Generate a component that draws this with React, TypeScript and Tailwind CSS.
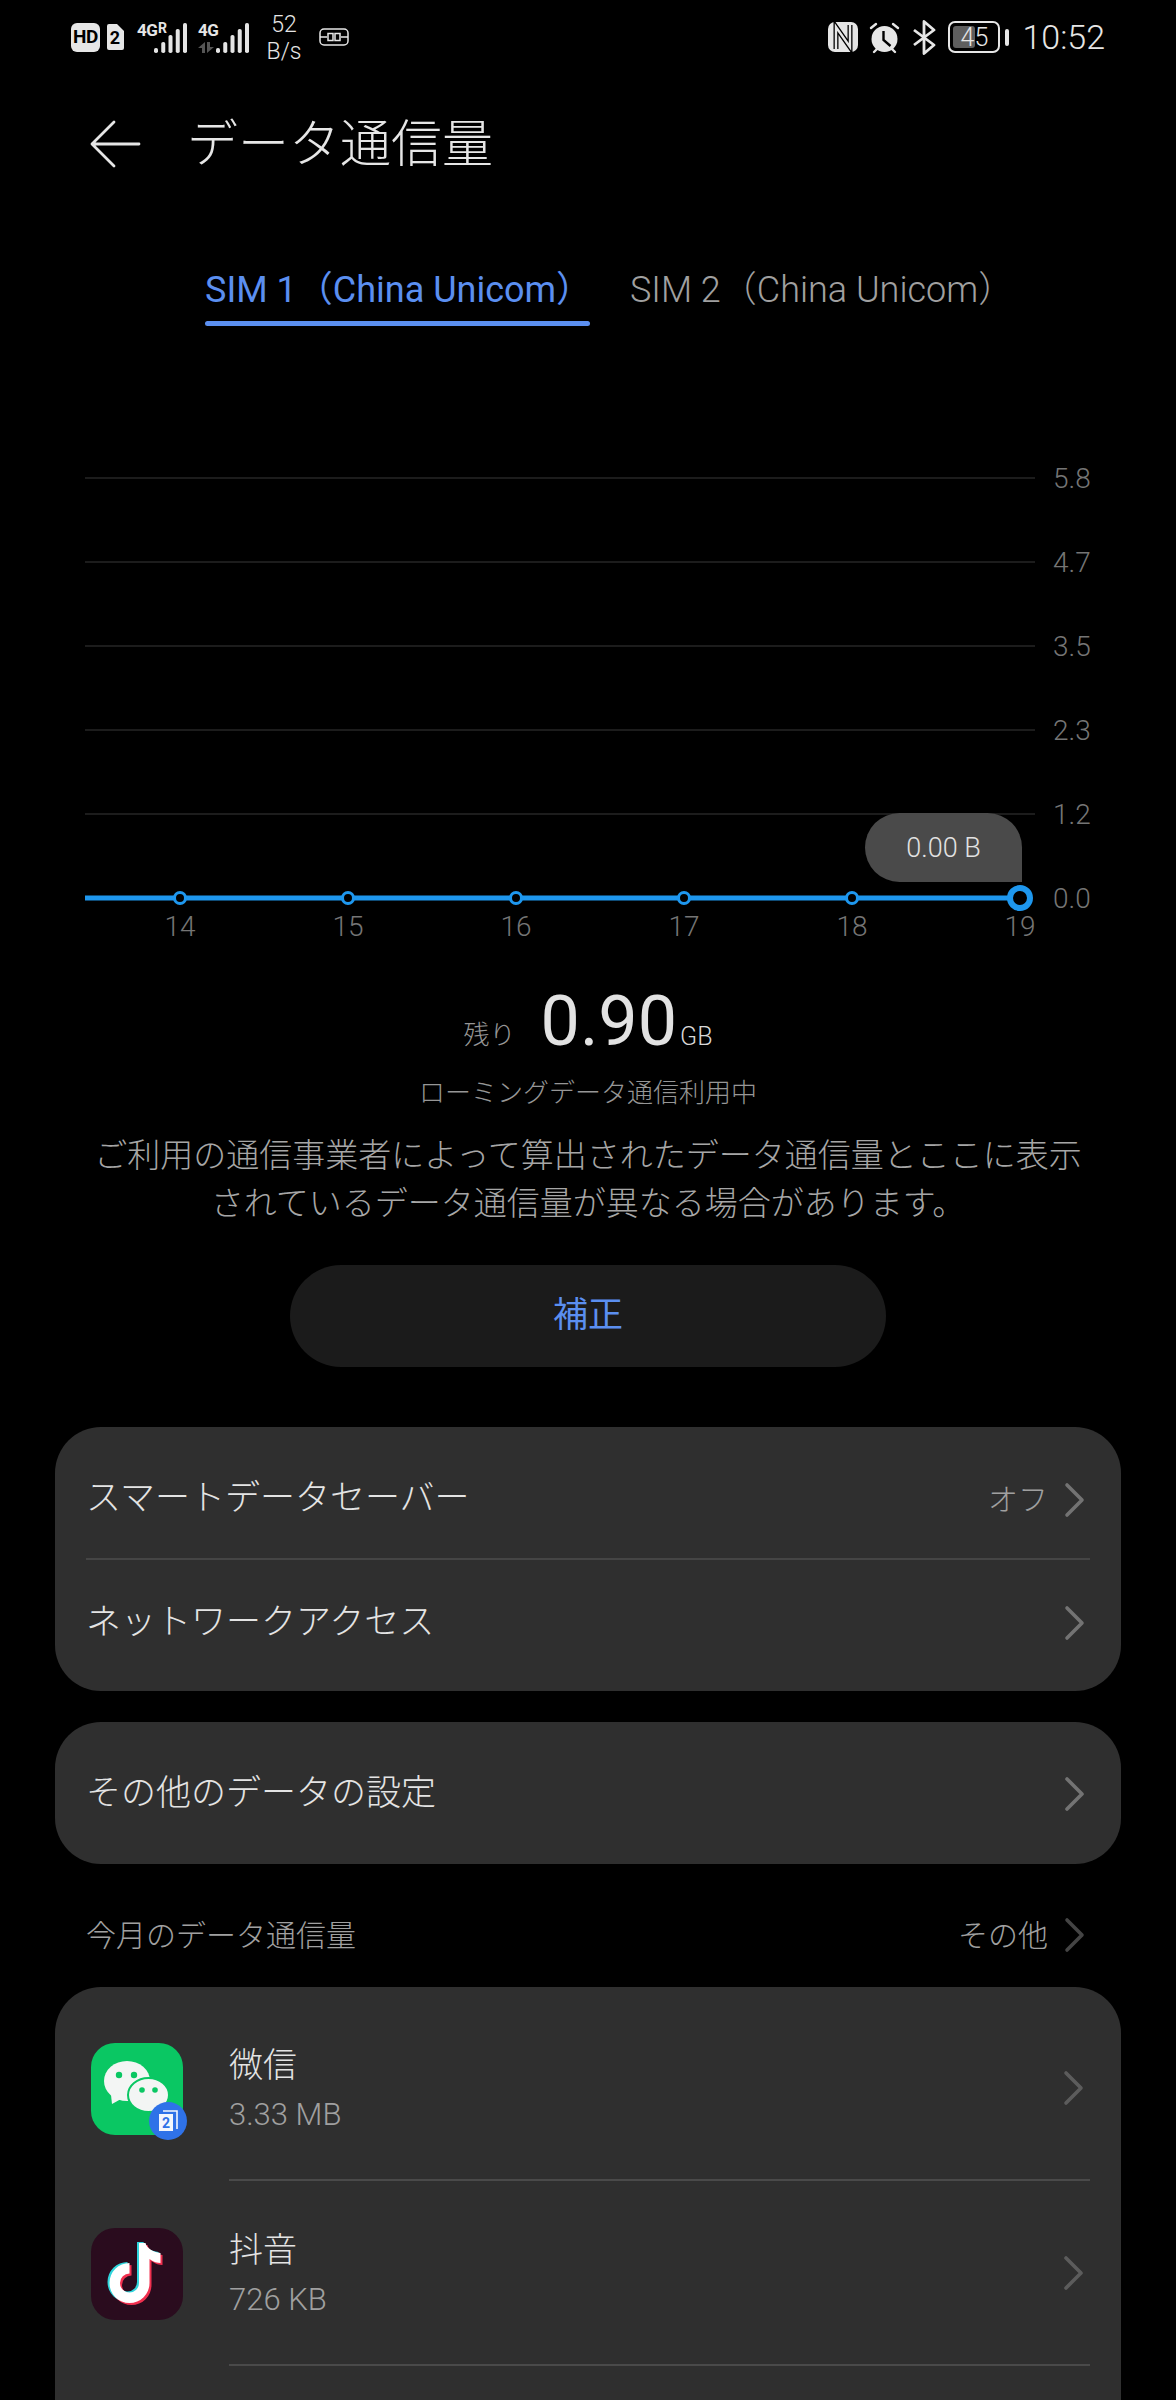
const sans = "font-['Roboto','Noto_Sans_CJK_JP',sans-serif]";

function Chevron({ color = '#737373' }: { color?: string }) {
  return (
    <svg className="mr-[4px]" width="22" height="36" viewBox="0 0 22 36" fill="none" stroke={color} strokeWidth="3.6" strokeLinecap="round" strokeLinejoin="round">
      <path d="M3 3l15 15L3 33" />
    </svg>
  );
}

function Signal() {
  const bars = [5, 11, 18, 24, 30];
  return (
    <svg width="34" height="31" viewBox="0 0 34 31" fill="#e4e4e4">
      {bars.map((h, i) => (
        <rect key={i} x={i * 7.25} y={31 - h} width="4" height={h} rx="1.8" />
      ))}
    </svg>
  );
}

function StatusBar() {
  return (
    <div className="flex h-[74px] items-center justify-between pl-[71px] pr-[71px] text-[#e6e6e6]">
      <div className="flex items-center">
        <div className="flex h-[29px] w-[29px] items-center justify-center rounded-[6px] bg-[#e6e6e6] text-[19px] font-bold tracking-[-0.5px] text-black">HD</div>
        <svg width="18" height="26" viewBox="0 0 18 26" className="ml-[6px]">
          <path d="M3 0h8l7 7v17a2 2 0 01-2 2H3a2 2 0 01-2-2V2a2 2 0 012-2z" fill="#e6e6e6" />
          <text x="9" y="20" textAnchor="middle" fontSize="18" fontWeight="700" fill="#000" fontFamily="Roboto">2</text>
        </svg>
        <div className="relative ml-[13px] h-[32px] w-[50px]">
          <span className="absolute left-0 top-[-3px] text-[17px] font-bold tracking-[-0.5px]">4G</span>
          <span className="absolute left-[21px] top-[-3px] text-[14px] font-bold">R</span>
          <div className="absolute bottom-0 left-[17px]"><Signal /></div>
        </div>
        <div className="relative ml-[11px] h-[32px] w-[50px]">
          <span className="absolute left-0 top-[-3px] text-[17px] font-bold tracking-[-0.5px]">4G</span>
          <svg width="16" height="11" viewBox="0 0 16 11" fill="#555" className="absolute left-0 bottom-0">
            <path d="M7 0v11H4V6H0zM9 0h3v5h4l-7 6z" />
          </svg>
          <div className="absolute bottom-0 left-[18px]"><Signal /></div>
        </div>
        <div className="ml-[18px] mt-[2px] flex w-[36px] flex-col items-center text-[23px] font-light leading-[27px]">
          <span>52</span>
          <span>B/s</span>
        </div>
        <svg width="30" height="18" viewBox="0 0 30 18" fill="none" stroke="#e6e6e6" strokeWidth="1.5" className="ml-[17px]">
          <rect x="1" y="1" width="28" height="16" rx="4" />
          <path d="M1 9h7M22 9h7M9 5.5h5v7H9zM16 5.5h5v7h-5z" />
        </svg>
      </div>
      <div className="flex items-center">
        <svg width="30" height="30" viewBox="0 0 30 30" className="mr-[10px]">
          <rect width="30" height="30" rx="7" fill="#e6e6e6" />
          <path d="M8 27V5l14 20V3" fill="none" stroke="#000" strokeWidth="5" />
          <path d="M8 30V5l14 20V0" fill="none" stroke="#e6e6e6" strokeWidth="2.4" />
        </svg>
        <svg width="33" height="33" viewBox="0 0 33 33" className="mr-[11px]" fill="#e6e6e6">
          <circle cx="16.5" cy="18" r="13" />
          <path d="M15.5 10v9l7 6" stroke="#000" strokeWidth="2.4" fill="none" />
          <path d="M3 7l5-4M30 7l-5-4M6 31l3-3M27 31l-3-3" stroke="#e6e6e6" strokeWidth="2.4" strokeLinecap="round" />
        </svg>
        <svg width="24" height="35" viewBox="0 0 24 35" fill="none" stroke="#e6e6e6" strokeWidth="2.8" strokeLinejoin="round" className="mr-[12px]">
          <path d="M2 10l20 15-10 8.5V1.5L22 10 2 25" />
        </svg>
        <div className="relative flex h-[32px] w-[52px] items-center justify-center rounded-[7px] border-2 border-[#e6e6e6]">
          <div className="absolute left-[3px] top-[3px] h-[22px] w-[22px] rounded-[3px] bg-[#5e5e5e]" />
          <span className="relative text-[25px] font-light leading-none">45</span>
        </div>
        <div className="ml-[5px] h-[17px] w-[4px] rounded-[2px] bg-[#e6e6e6]" />
        <span className="ml-[13px] text-[34px] font-light leading-none">10:52</span>
      </div>
    </div>
  );
}

function Chart() {
  const ys = [
    { y: 478, label: '5.8' },
    { y: 562, label: '4.7' },
    { y: 646, label: '3.5' },
    { y: 730, label: '2.3' },
    { y: 814, label: '1.2' },
  ];
  const days = [
    { x: 180, d: '14' },
    { x: 348, d: '15' },
    { x: 516, d: '16' },
    { x: 684, d: '17' },
    { x: 852, d: '18' },
  ];
  const top = 450;
  return (
    <div className="relative mt-[124px] h-[500px]">
      <svg width="1176" height="500" viewBox={`0 ${top} 1176 500`} fontFamily="Roboto">
        {ys.map((r) => (
          <g key={r.label}>
            <line x1="85" x2="1035" y1={r.y} y2={r.y} stroke="#262626" strokeWidth="1.5" />
            <text x="1053" y={r.y + 10} fontSize="28" fontWeight="300" fill="#757575">{r.label}</text>
          </g>
        ))}
        <line x1="85" x2="1020" y1="898" y2="898" stroke="#1e97ee" strokeWidth="5" />
        <text x="1053" y="908" fontSize="28" fontWeight="300" fill="#757575">0.0</text>
        {days.map((p) => (
          <g key={p.d}>
            <circle cx={p.x} cy="898" r="5.5" fill="#000" stroke="#1e97ee" strokeWidth="3" />
            <text x={p.x} y="936" fontSize="28" fontWeight="300" textAnchor="middle" fill="#757575">{p.d}</text>
          </g>
        ))}
        <circle cx="1020" cy="898" r="10" fill="#000" stroke="#1e97ee" strokeWidth="6" />
        <text x="1020" y="936" fontSize="28" fontWeight="300" textAnchor="middle" fill="#757575">19</text>
      </svg>
      <div className="absolute left-[865px] top-[363px] flex h-[69px] w-[157px] items-center justify-center rounded-[35px] rounded-br-none bg-[#4a4a4a] pt-[2px] text-[27px] font-light text-[#e2e2e2]">
        0.00 B
      </div>
    </div>
  );
}

function Row({ label, value }: { label: string; value?: string }) {
  return (
    <div className="flex items-center justify-between">
      <span className="text-[35px] font-light text-[#e4e4e4]">{label}</span>
      <div className="flex items-center">
        {value && <span className="mr-[16px] text-[30px] font-light text-[#a0a0a0]">{value}</span>}
        <Chevron />
      </div>
    </div>
  );
}

function WeChatIcon() {
  return (
    <div className="relative h-[92px] w-[92px]">
      <svg width="92" height="92" viewBox="0 0 92 92">
        <rect width="92" height="92" rx="24" fill="#0ac763" />
        <ellipse cx="36" cy="38" rx="23" ry="20" fill="#f3f5f4" />
        <path d="M20 52l1 9 9-5z" fill="#f3f5f4" />
        <ellipse cx="57.5" cy="52" rx="20.5" ry="17" fill="#f3f5f4" stroke="#0ac763" strokeWidth="2" />
        <circle cx="28" cy="32" r="3.2" fill="#0ac763" />
        <circle cx="43" cy="32" r="3.2" fill="#0ac763" />
        <circle cx="51" cy="47" r="2.8" fill="#0ac763" />
        <circle cx="64" cy="47" r="2.8" fill="#0ac763" />
      </svg>
      <div className="absolute left-[58px] top-[59px] flex h-[38px] w-[38px] items-center justify-center rounded-full bg-[#2f72e8]">
        <svg width="20" height="22" viewBox="0 0 20 22">
          <rect x="1" y="4" width="14" height="17" fill="#f4f7fd" />
          <path d="M5 1h14v18" fill="none" stroke="#f4f7fd" strokeWidth="1.6" />
          <text x="8" y="18" textAnchor="middle" fontSize="14" fontWeight="700" fill="#2f72e8" fontFamily="Roboto">2</text>
        </svg>
      </div>
    </div>
  );
}

function TikTokIcon() {
  const note = 'M50 17v40a9.5 9.5 0 11-9.5-9.5V37a20 20 0 1020 20V33c4 3 8 4 11 4V27c-8-1-14-5-15-10z';
  return (
    <svg width="92" height="92" viewBox="0 0 92 92">
      <rect width="92" height="92" rx="24" fill="#2a0c1e" />
      <g transform="translate(-2 -2)">
        <path d={note} fill="#2fd5dc" transform="translate(-2 -1)" />
        <path d={note} fill="#f0304f" transform="translate(2 2)" />
        <path d={note} fill="#fff" />
      </g>
    </svg>
  );
}

function AppRow({ icon, name, size }: { icon: React.ReactNode; name: string; size: string }) {
  return (
    <div className="flex h-[185px] items-center pl-[36px]">
      {icon}
      <div className="ml-[46px] flex h-full flex-1 items-center justify-between border-b-2 border-[#4a4a4a] pr-[1px]">
        <div className="flex flex-col">
          <span className="text-[34px] font-light leading-[46px] text-[#e4e4e4]">{name}</span>
          <span className="mt-[8px] text-[31px] font-light leading-[38px] text-[#a0a0a0]">{size}</span>
        </div>
        <Chevron color="#5c5c5c" />
      </div>
    </div>
  );
}

export default function App() {
  return (
    <div className={`h-[2400px] w-[1176px] overflow-hidden bg-black ${sans}`}>
      <StatusBar />
      <div className="mt-[33px] flex h-[74px] items-center pl-[90px]">
        <svg width="51" height="48" viewBox="0 0 51 48" fill="none" stroke="#e6e6e6" strokeWidth="2.8" strokeLinecap="round" strokeLinejoin="round">
          <path d="M49 24H2M24 2L2 24l22 22" />
        </svg>
        <h1 className="ml-[46px] text-[51px] font-light leading-none text-[#e6e6e6]">データ通信量</h1>
      </div>
      <div className="mt-[85px] flex pl-[205px]">
        <div className="flex w-[385px] flex-col">
          <span className="text-[36px] leading-[48px] text-[#5b8ff0]">SIM 1（China Unicom）</span>
          <div className="mt-[7px] h-[5px] rounded-full bg-[#5b8ff0]" />
        </div>
        <span className="ml-[40px] text-[36px] font-light leading-[48px] text-[#a0a0a0]">SIM 2（China Unicom）</span>
      </div>
      <Chart />
      <div className="mt-[24px] flex flex-col items-center">
        <div className="flex h-[94px] items-end">
          <span className="mb-[13px] text-[26px] font-light text-[#969696]">残り</span>
          <span className="ml-[25px] text-[70px] leading-[94px] text-[#e2e2e2]">0.90</span>
          <span className="mb-[13px] ml-[3px] text-[25px] font-light text-[#d8d8d8]">GB</span>
        </div>
        <p className="mt-[7px] text-[26px] font-light leading-[36px] text-[#969696]">ローミングデータ通信利用中</p>
        <p className="mt-[21px] text-center text-[33px] font-light leading-[48px] text-[#a6a6a6]">
          ご利用の通信事業者によって算出されたデータ通信量とここに表示
          <br />
          されているデータ通信量が異なる場合があります。
        </p>
        <div className="mt-[37px] flex h-[102px] w-[596px] items-center justify-center rounded-[51px] bg-[#1b1b1b] text-[35px] text-[#5b8ff0]">
          補正
        </div>
      </div>
      <div className="mx-[55px] mt-[60px] rounded-[46px] bg-[#2f2f2f] px-[31px]">
        <div className="flex h-[133px] flex-col justify-center border-b-2 border-[#454545] pt-[14px]">
          <Row label="スマートデータセーバー" value="オフ" />
        </div>
        <div className="flex h-[131px] flex-col justify-center pb-[5px]">
          <Row label="ネットワークアクセス" />
        </div>
      </div>
      <div className="mx-[55px] mt-[31px] flex h-[142px] flex-col justify-center rounded-[46px] bg-[#2f2f2f] px-[31px] pt-[2px]">
        <Row label="その他のデータの設定" />
      </div>
      <div className="mx-[86px] mt-[48px] flex h-[46px] items-center justify-between">
        <span className="text-[30px] font-light text-[#a0a0a0]">今月のデータ通信量</span>
        <div className="flex items-center">
          <span className="mr-[16px] text-[30px] font-light text-[#a0a0a0]">その他</span>
          <Chevron color="#444444" />
        </div>
      </div>
      <div className="mx-[55px] mt-[29px] rounded-[46px] bg-[#2f2f2f] pr-[31px] pt-[9px]">
        <AppRow icon={<WeChatIcon />} name="微信" size="3.33 MB" />
        <AppRow icon={<TikTokIcon />} name="抖音" size="726 KB" />
        <div className="h-[200px]" />
      </div>
    </div>
  );
}
